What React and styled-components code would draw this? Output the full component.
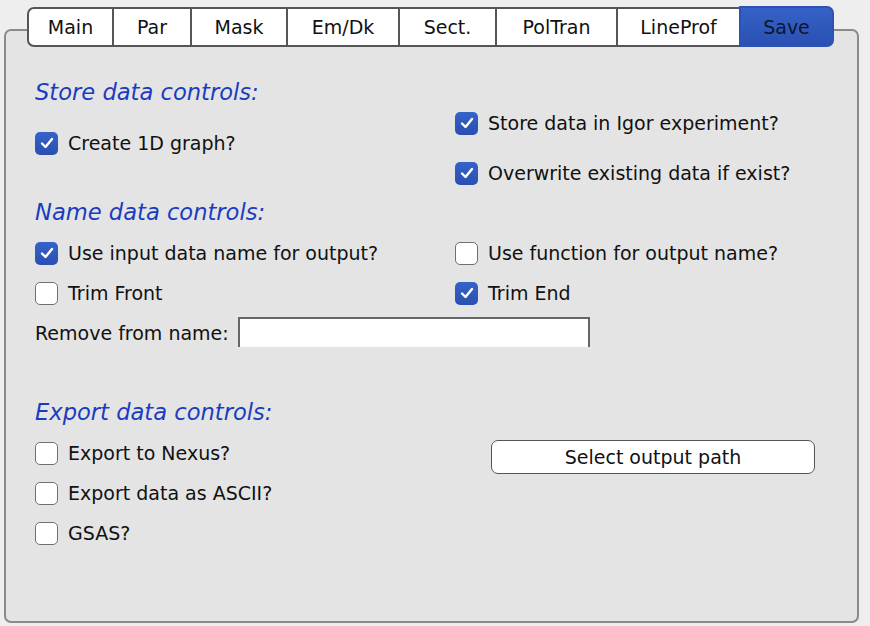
import React from "react"
import styled, { createGlobalStyle } from "styled-components"

const GlobalStyle = createGlobalStyle`
  html, body {
    margin: 0;
    padding: 0;
    background: #eeeeee;
    font-family: "DejaVu Sans", "Liberation Sans", sans-serif;
  }
`

// widths are the visible spans, the 2px overlap is added in Tab
const tabs = [
  { label: "Main", width: 87 },
  { label: "Par", width: 78 },
  { label: "Mask", width: 96 },
  { label: "Em/Dk", width: 112 },
  { label: "Sect.", width: 97 },
  { label: "PolTran", width: 121 },
  { label: "LineProf", width: 123 },
  { label: "Save", width: 93, active: true },
]

const Check = ({ checked, children }) => (
  <CheckRow>
    <Box $checked={checked}>
      {checked && (
        <svg width="14" height="12" viewBox="0 0 14 12">
          <path
            d="M2 6.5 L5.5 10 L12 2"
            fill="none"
            stroke="#fff"
            strokeWidth="2.4"
            strokeLinecap="round"
            strokeLinejoin="round"
          />
        </svg>
      )}
    </Box>
    <Label>{children}</Label>
  </CheckRow>
)

const App = () => {
  return (
    <Wrapper>
      <GlobalStyle />
      <TabBar>
        {tabs.map((t) => (
          <Tab key={t.label} $width={t.width} $active={t.active}>
            {t.label}
          </Tab>
        ))}
      </TabBar>
      <Panel>
        <Heading>Store data controls:</Heading>
        <Grid>
          <Column>
            <Offset $top={20}>
              <Check checked>Create 1D graph?</Check>
            </Offset>
          </Column>
          <Column $gap={14}>
            <Check checked>Store data in Igor experiment?</Check>
            <Check checked>Overwrite existing data if exist?</Check>
          </Column>
        </Grid>

        <Heading $top={8}>Name data controls:</Heading>
        <Grid $rowGap={4}>
          <Check checked>Use input data name for output?</Check>
          <Check>Use function for output name?</Check>
          <Check>Trim Front</Check>
          <Check checked>Trim End</Check>
          <NameRow>
            <Label>Remove from name:</Label>
            <NameInput />
          </NameRow>
        </Grid>

        <Heading $top={48}>Export data controls:</Heading>
        <Grid>
          <Column $gap={4}>
            <Check>Export to Nexus?</Check>
            <Check>Export data as ASCII?</Check>
            <Check>GSAS?</Check>
          </Column>
          <Column>
            <PathButton>Select output path</PathButton>
          </Column>
        </Grid>
      </Panel>
    </Wrapper>
  )
}

const Wrapper = styled.div`
  width: 870px;
  height: 626px;
  padding-top: 7px;
  box-sizing: border-box;
  overflow: hidden;
`

const TabBar = styled.div`
  position: relative;
  z-index: 1;
  display: flex;
  height: 40px;
  margin-left: 27px;
`

const Tab = styled.div`
  width: ${(p) => p.$width + 2}px;
  box-sizing: border-box;
  display: flex;
  align-items: center;
  justify-content: center;
  margin-left: -2px;
  font-size: 19px;
  color: ${(p) => (p.$active ? "#0e1630" : "#111")};
  background: ${(p) =>
    p.$active ? "linear-gradient(#3562c8, #2a50b2)" : "#ffffff"};
  border: 2px solid ${(p) => (p.$active ? "#2b52b4" : "#555")};
  border-radius: ${(p) => (p.$active ? "0 7px 7px 0" : "0")};
  ${(p) => p.$active && "margin-top: -1px; height: 41px;"}

  &:first-child {
    width: ${(p) => p.$width}px;
    margin-left: 0;
    border-radius: 7px 0 0 7px;
  }
`

const Panel = styled.div`
  margin: -18px 0 0 4px;
  width: 855px;
  height: 594px;
  box-sizing: border-box;
  background: #e4e4e4;
  border: 2px solid #8a8a8a;
  border-radius: 7px;
  padding: 48px 0 0 29px;
`

const Heading = styled.div`
  height: 26px;
  line-height: 26px;
  margin-top: ${(p) => p.$top || 0}px;
  font-size: 22.6px;
  font-style: italic;
  color: #1b3cc0;
`

const Grid = styled.div`
  display: grid;
  grid-template-columns: 420px 1fr;
  row-gap: ${(p) => p.$rowGap || 0}px;
  margin-top: ${(p) => (p.$rowGap ? 10 : 0)}px;
  align-items: start;
`

const Column = styled.div`
  display: flex;
  flex-direction: column;
  gap: ${(p) => p.$gap || 0}px;
  margin-top: ${(p) => (p.$gap === 4 ? 10 : 0)}px;
`

const Offset = styled.div`
  margin-top: ${(p) => p.$top}px;
`

const CheckRow = styled.div`
  display: flex;
  align-items: center;
  height: 36px;
  gap: 10px;
`

const Box = styled.div`
  width: 23px;
  height: 23px;
  box-sizing: border-box;
  border-radius: 5px;
  display: flex;
  align-items: center;
  justify-content: center;
  background: ${(p) =>
    p.$checked ? "linear-gradient(#3563c9, #2a4fb0)" : "#ffffff"};
  border: ${(p) => (p.$checked ? "none" : "1.5px solid #6f6f6f")};
`

const Label = styled.span`
  font-size: 19px;
  color: #111;
  white-space: nowrap;
`

const NameRow = styled.div`
  grid-column: 1 / -1;
  display: flex;
  align-items: center;
  gap: 9px;
  height: 36px;
`

const NameInput = styled.div`
  width: 352px;
  height: 30px;
  box-sizing: border-box;
  background: #fff;
  border: 2px solid #666;
  border-bottom: none;
  margin-top: -2px;
`

const PathButton = styled.button`
  margin: 15px 0 0 36px;
  width: 324px;
  height: 34px;
  box-sizing: border-box;
  background: #fff;
  border: 1.5px solid #555;
  border-radius: 7px;
  font-family: "DejaVu Sans", "Liberation Sans", sans-serif;
  font-size: 19px;
  color: #111;
  padding: 0;
`

export default App
